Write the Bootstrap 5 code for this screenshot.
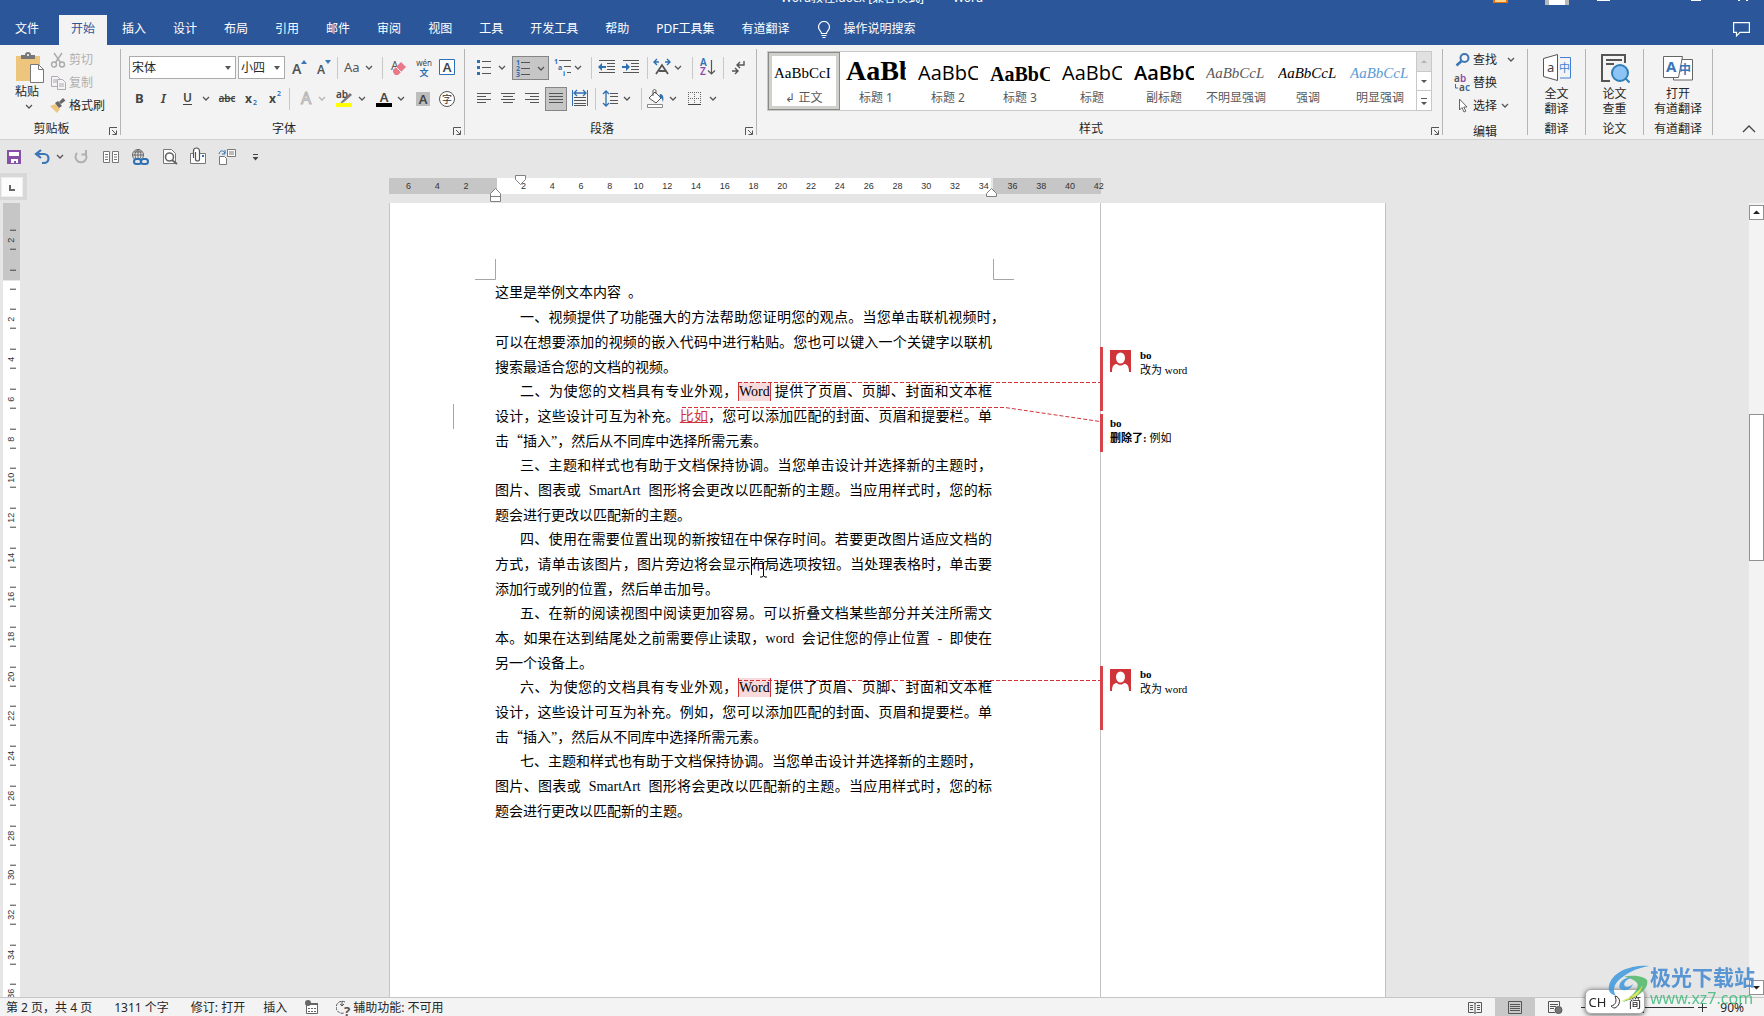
<!DOCTYPE html>
<html lang="zh-CN">
<head>
<meta charset="utf-8">
<meta name="viewport" content="width=device-width, initial-scale=1">
<title>Word教程.docx - Word</title>
<link href="https://cdn.jsdelivr.net/npm/bootstrap@5.3.0/dist/css/bootstrap.min.css" rel="stylesheet">
<style>
:root{--ui:"Noto Sans","Noto Sans CJK SC",sans-serif;--doc:"Liberation Serif","Noto Sans CJK SC",serif;--blue:#2b579a;--ink:#262626;--line:#c6c6c6;--red:#d13438}
body{font:12px/16px var(--ui);color:var(--ink);background:#e6e6e6;height:100vh;overflow:hidden}
button{font:inherit;color:inherit;background:none;border:0;padding:0}
svg{display:block;flex:none}
svg text{font-family:var(--ui)}
.topband{background:var(--blue);color:#fff}
.titlebar{height:5px;overflow:hidden}
.titlebar .doc-title{line-height:14px;white-space:pre}
.tabstrip{height:40px;padding:8px 14px 0 3px}
.tabstrip .nav{gap:3px}
.tabstrip .nav-link{padding:0 12px;height:32px;line-height:32px;color:#fff;border-radius:0;font-size:12px;white-space:nowrap}
.tabstrip .nav-link.active{background:#f3f3f3;color:var(--blue);margin-top:2px;height:30px;line-height:28px}
.tabstrip .file-tab{margin-right:5px}
.tellme{gap:12px;padding-left:16px;line-height:32px;height:32px}
.ribbon{background:#f3f3f3;border-bottom:1px solid #d0d0d0;height:95px;padding:4px 0}
.rgroup{border-right:1px solid #b5b5b5;white-space:nowrap}
.rgroup .gbody{height:72px}
button.gbody{line-height:15px;display:block;padding-bottom:5px}
.glabel{height:16px}
.g-clip{width:121px}.g-font{width:344px}.g-para{width:292px}.g-edit{width:85px}.g-one{width:58px}.g-yd{width:69px}
.toolrow{height:24px;margin-top:7px}
.toolrow .vr{background:#c8c8c8;opacity:1;height:22px;align-self:center;margin:0 2px;width:1px}
.pressed{background:#c6c6c6;outline:1px solid #868686;outline-offset:-1px}
.combo{appearance:none;flex:none;height:23px;border:1px solid #ababab;border-radius:0;font:12px/16px var(--ui);padding:0 16px 0 2px;color:var(--ink);background:#fff url("data:image/svg+xml,%3Csvg xmlns='http://www.w3.org/2000/svg' width='6' height='4'%3E%3Cpath d='M0 0h6L3 4z' fill='%23555'/%3E%3C/svg%3E") no-repeat right 4px center}
.combo.face{width:107px;margin-right:2px}.combo.size{width:47px}
.cmds{margin-top:-1px}
.cmd{height:23px;gap:3px}
.cmd:disabled{color:#b0b0b0}
.gallery{margin:2px 10px 0;height:60px;border:1px solid #c8c8c8;background:#fff}
.tile{width:72px;height:58px;color:#595959;overflow:hidden}
.tile .sample{width:60px;height:31px;line-height:30px;overflow:hidden;text-align:left;margin:1px auto 0;color:#000;white-space:nowrap}
.tile .cap{margin-top:1px}
.tile.on{outline:1px solid #8a8a86;outline-offset:-1px;box-shadow:inset 0 0 0 4px #cfcfcb}
.tile .serif{font-family:"Liberation Serif",serif;font-size:15px}
.tile .h-one{font:bold 28px/26px "Liberation Serif",serif}
.tile .h-three{font:bold 20px/32px "Liberation Serif",serif}
.tile .h-sans{font-family:"Open Sans",sans-serif;font-size:20px}
.tile .soft{color:#595959}
.tile .accent{color:#5b9bd5}
.gscroll{width:15px;border-left:1px solid #c8c8c8}
.gscroll .off{background:#e1e1e1}
.gscroll button+button{border-top:1px solid #c8c8c8}
.collapser{width:51px}
.qat{height:33px}
.tabcorner{width:27px;height:27px;background:#d8d8d8;padding:4px 4px 3px 1px}
.tabcorner button{width:22px;height:20px;background:#fcfcfc;border:1px solid #eee}
.rulerrow{height:30px;padding-right:16px}
.doccol{padding-left:6px}
.hruler{width:997px;height:30px}
.hbar{width:712px;height:16px;margin-top:5px}
.hbar .edge{width:108px;background:#c6c6c6}
.hbar .mid{background:#fff;margin-right:2px}
.marks{left:5px;top:5px;width:719px;height:16px;font:9px/17px "Liberation Sans",sans-serif;color:#333}
.marks span{flex:1;text-align:center}
.work{min-height:0}
.vruler{width:17px;margin-left:3px;background:#fff;overflow:hidden}
.vruler .vtop{height:78px;background:#c6c6c6;border-bottom:1px solid #e6e6e6}
.vmarks{top:17px;left:0;width:17px;height:794px;font:9px/10px "Liberation Sans",sans-serif;color:#333}
.vmarks span{flex:1;writing-mode:vertical-rl;transform:rotate(180deg);text-align:center;padding-right:3px;background:linear-gradient(#444,#444) 4px 25%/6px 1px no-repeat,linear-gradient(#444,#444) 4px 75%/6px 1px no-repeat}
.sheet{width:997px;background:#fff;border:solid #c3c3c3;border-width:0 1px;overflow:hidden}
.textcol{width:711px;border-right:1px solid #c3c3c3;padding:78px 108px 0 105px}
.textcol p{font:14px/25px var(--doc);color:#000;margin:-1px 0 0;white-space:nowrap}
.textcol p:nth-of-type(2){margin-top:0}
.textcol p>span{display:block}
.textcol p>.full{text-align-last:justify}
.textcol p>.ind{padding-left:25px}
.textcol p>.hang{margin-right:-13px}
.wideq{font-family:"Noto Sans CJK SC",sans-serif;line-height:1}
.noted{background:#f8d9dc;border:solid var(--red);border-width:0 1px;padding:2px 0}
.added{color:var(--red);text-decoration:underline}
.pane{font:11px/15px var(--doc);color:#000;padding-top:144px;margin-left:-1px}
.note{border-left:3px solid #d6444a;padding:3px 0 0 7px;gap:9px;height:64px}
.note.short{height:38px;margin-top:3px;padding-top:2px}
.note.far{margin-top:214px}
.note .who{margin-top:-2px}
.overlay{left:-1px;top:0;pointer-events:none}
.vscroll{width:15px;background:#f3f3f3;padding:2px 0}
.vscroll button{height:15px;background:#fff;border:1px solid #919191}
.vscroll .thumb{height:147px;margin-top:194px;background:#fff;border:1px solid #919191}
.statusbar{height:19px;background:#f3f3f3;border-top:1px solid #c6c6c6;padding-left:6px;line-height:20px;white-space:nowrap}
.st-left{gap:18px}
.view-on{background:#c8c8c8}
.zoomer{appearance:none;width:100px;height:18px;background:linear-gradient(#333,#333) center/100% 1px no-repeat;margin:0}
.zoomer::-webkit-slider-thumb{appearance:none;width:5px;height:11px;background:#444}
.ime{right:119px;bottom:2px;width:60px;height:25px;background:#fff;border-radius:6px;border:1px solid #aaa;box-shadow:0 1px 5px #0009;font-size:13px}
.wm{right:9px;bottom:8px;opacity:.85;color:#3f86cf}
.wm .wm-name{font:bold 21px/24px "Noto Sans CJK SC",sans-serif}
.wm .wm-url{font:16px/20px "Noto Sans",sans-serif;color:#3fb979;text-decoration:none}
</style>
<script src="https://cdn.jsdelivr.net/npm/bootstrap@5.3.0/dist/js/bootstrap.bundle.min.js"></script>
</head>
<body class="d-flex flex-column">
<svg width="0" height="0" class="position-absolute"><defs>
<path id="chev" d="M0 0l3 3 3-3" fill="none" stroke="#555" stroke-width="1.3"/>
<g id="launch" fill="none" stroke="#555"><path d="M.5 8V.5H8"/><path d="M3 3l4 4M7.5 3.500v4h-4"/></g>
</defs></svg>

<header class="topband">
  <div class="titlebar d-flex align-items-end justify-content-center position-relative">
    <span class="doc-title">Word教程.docx [兼容模式]    -    Word</span>
    <svg class="position-absolute end-0 top-0" width="280" height="9" overflow="visible"><path d="M9 3V0h15v3z" fill="#e8710a"/><path d="M11 2V0h11v2z" fill="#ffd38a"/><path d="M61 0h24v8H61z" fill="#b9b9b9"/><path d="M65 8V0h16v8z" fill="#fff"/><path d="M113 0h13v1h-13zM207 0h10v1h-10zM254 0h2v1h-2zM262 0h2v1h-2z" fill="#fff"/></svg>
  </div>
  <div class="tabstrip d-flex">
    <nav class="nav flex-nowrap">
      <a class="nav-link file-tab" href="#">文件</a><a class="nav-link active" href="#">开始</a><a class="nav-link" href="#">插入</a><a class="nav-link" href="#">设计</a><a class="nav-link" href="#">布局</a><a class="nav-link" href="#">引用</a><a class="nav-link" href="#">邮件</a><a class="nav-link" href="#">审阅</a><a class="nav-link" href="#">视图</a><a class="nav-link" href="#">工具</a><a class="nav-link" href="#">开发工具</a><a class="nav-link" href="#">帮助</a><a class="nav-link" href="#">PDF工具集</a><a class="nav-link" href="#">有道翻译</a>
    </nav>
    <button class="tellme d-flex"><svg width="14" height="18" viewBox="0 0 14 18" class="mt-2" fill="none" stroke="#fff" stroke-width="1.2"><path d="M4.5 12.500c0-2-3-3-3-6.500a5.500 5.500 0 0 1 11 0c0 3.500-3 4.500-3 6.500zM4.500 14.500h5M5.500 16.500h3"/></svg>操作说明搜索</button>
    <button class="ms-auto align-self-start mt-2" aria-label="批注"><svg width="17" height="16" viewBox="0 0 17 16" fill="none" stroke="#fff" stroke-width="1.200"><path d="M.6 1.600h15.800v9.800H7l-3.500 3.500v-3.500H.6z"/></svg></button>
  </div>
</header>

<section class="ribbon d-flex">
  <div class="rgroup g-clip">
    <div class="gbody d-flex">
      <button class="d-flex flex-column align-items-center ps-2 ms-1">
        <svg width="34" height="35" viewBox="11 49 34 35"><path d="M15 56h24v25H15z" fill="#eec57d"/><path d="M20 59v-4h4a3 3 0 0 1 6 0h4v4z" fill="#777"/><circle cx="27" cy="55" r="1" fill="#fff"/><path d="M29.500 64.500h8l5 5v13h-13z" fill="#fff" stroke="#777"/><path d="M37.500 64.500v5h5" fill="none" stroke="#777"/></svg>
        <span class="me-1">粘贴</span>
        <svg width="14" height="12"><use href="#chev" x="4" y="5"/></svg>
      </button>
      <div class="cmds ms-1">
        <button class="cmd d-flex align-items-center" disabled><svg width="16" height="16" viewBox="0 0 16 16" fill="none" stroke="#aaa" stroke-width="1.400"><path d="M4 1l6.500 9.500M12 1L5.500 10.500"/><circle cx="4" cy="12.500" r="2.500"/><circle cx="12" cy="12.500" r="2.500"/></svg>剪切</button>
        <button class="cmd d-flex align-items-center" disabled><svg width="16" height="16" viewBox="0 0 16 16" fill="#f3f3f3" stroke="#b0a8b4"><path d="M1.500 1.500h6l2 2v8h-8zM3 5h4M3 7h4"/><path d="M7.500 4.500h5l3 3v7h-8zM9 9h5M9 11h5"/></svg>复制</button>
        <button class="cmd d-flex align-items-center"><svg width="16" height="16" viewBox="0 0 16 16"><path d="M0 8l6-2 4 5-3 4z" fill="#eec57d"/><path d="M5 5l3-2 4 5-3 2zM9 4l4-4 2.500 2.500L11 6z" fill="#666"/></svg>格式刷</button>
      </div>
    </div>
    <div class="glabel d-flex"><span class="flex-grow-1 text-center">剪贴板</span><button aria-label="剪贴板选项"><svg width="17" height="16"><use href="#launch" x="6" y="6"/></svg></button></div>
  </div>

  <div class="rgroup g-font">
    <div class="gbody overflow-hidden ps-2">
      <div class="toolrow d-flex">
        <select class="combo face" aria-label="字体"><option>宋体</option></select>
        <select class="combo size" aria-label="字号"><option>小四</option></select>
        <button aria-label="增大字号"><svg width="28" height="24"><text x="7" y="18" font-size="14" fill="#555" font-weight="600">A</text><path d="M16 8l3-4 3 4z" fill="#3a76b5"/></svg></button>
        <button aria-label="减小字号"><svg width="22" height="24"><text x="4" y="18" font-size="12" fill="#555" font-weight="600">A</text><path d="M12 4l3 4 3-4z" fill="#3a76b5"/></svg></button>
        <i class="vr"></i>
        <button aria-label="更改大小写"><svg width="40" height="24"><text x="4" y="16" font-size="13" fill="#555">Aa</text><use href="#chev" x="26" y="10"/></svg></button>
        <i class="vr"></i>
        <button aria-label="清除格式"><svg width="28" height="24"><text x="6" y="14" font-size="12" fill="#555">A</text><path d="M8 14l8-8 5 5-8 8h-3l-2-3z" fill="#e8788a"/><path d="M11 11l5 5" stroke="#fff"/></svg></button>
        <button aria-label="拼音"><svg width="22" height="24"><text x="11" y="10" font-size="8" text-anchor="middle" fill="#444">wén</text><text x="11" y="20" font-size="9" text-anchor="middle" fill="#2f6fb3" font-weight="700">文</text></svg></button>
        <button aria-label="字符边框"><svg width="24" height="24"><path d="M4.500 3.500h15v15h-15z" fill="#fff" stroke="#2f6fb3"/><text x="12" y="16" font-size="13" text-anchor="middle" fill="#444" font-weight="600">A</text></svg></button>
      </div>
      <div class="toolrow d-flex">
        <button aria-label="加粗"><svg width="20" height="24"><text x="6" y="16" font-size="13" font-weight="700" fill="#444">B</text></svg></button>
        <button aria-label="倾斜"><svg width="28" height="24"><text x="12" y="16" font-size="13" font-style="italic" font-weight="600" fill="#444">I</text></svg></button>
        <button aria-label="下划线"><svg width="20" height="24"><text x="6" y="15" font-size="12" font-weight="600" fill="#444">U</text><path d="M6 17.500h9" stroke="#444"/></svg></button>
        <button aria-label="下划线样式"><svg width="18" height="24"><use href="#chev" x="6" y="10"/></svg></button>
        <button aria-label="删除线"><svg width="24" height="24"><text x="12" y="15" font-size="10" text-anchor="middle" font-weight="600" fill="#444">abc</text><path d="M4 11.500h16" stroke="#444"/></svg></button>
        <button aria-label="下标"><svg width="24" height="24"><text x="6" y="16" font-size="12" font-weight="700" fill="#444">x</text><text x="14" y="18" font-size="7" font-weight="600" fill="#2f6fb3">2</text></svg></button>
        <button aria-label="上标"><svg width="24" height="24"><text x="6" y="16" font-size="12" font-weight="700" fill="#444">x</text><text x="14" y="9" font-size="7" font-weight="600" fill="#2f6fb3">2</text></svg></button>
        <i class="vr"></i>
        <button aria-label="文本效果"><svg width="38" height="24"><text x="9" y="17" font-size="16" fill="#fff" stroke="#b5b5b5">A</text><use href="#chev" x="27" y="10" opacity=".4"/></svg></button>
        <button aria-label="突出显示"><svg width="40" height="24"><text x="6" y="11" font-size="10" fill="#444" font-weight="600">ab</text><path d="M11 15l9-9 2 2-8 7-4 2z" fill="#777"/><path d="M6 16h16v4H6z" fill="#ff0"/><use href="#chev" x="29" y="10"/></svg></button>
        <button aria-label="字体颜色"><svg width="38" height="24"><text x="14" y="15" font-size="13" text-anchor="middle" fill="#444" font-weight="600">A</text><path d="M6 16h16v4H6z"/><use href="#chev" x="28" y="10"/></svg></button>
        <button aria-label="字符底纹"><svg width="27" height="24"><path d="M8 5h14v14H8z" fill="#bdbdbd"/><text x="15" y="17" font-size="13" text-anchor="middle" fill="#444" font-weight="600">A</text></svg></button>
        <button aria-label="带圈字符"><svg width="24" height="24"><circle cx="12" cy="12" r="7.500" fill="#fff" stroke="#555"/><text x="12" y="16" font-size="10" text-anchor="middle" fill="#333">字</text></svg></button>
      </div>
    </div>
    <div class="glabel d-flex"><span class="flex-grow-1 text-center">字体</span><button aria-label="字体选项"><svg width="17" height="16"><use href="#launch" x="6" y="6"/></svg></button></div>
  </div>

  <div class="rgroup g-para">
    <div class="gbody overflow-hidden ps-2">
      <div class="toolrow d-flex">
        <button aria-label="项目符号"><svg width="39" height="24"><path d="M4 4h3v3H4zM4 10h3v3H4zM4 16h3v3H4z" fill="#2f6fb3"/><path d="M9 5.500h9M9 11.500h9M9 17.500h9" stroke="#555"/><use href="#chev" x="26" y="10"/></svg></button>
        <button class="pressed" aria-label="编号"><svg width="37" height="23"><g font-size="7" fill="#2f6fb3" font-weight="700"><text x="4" y="8">1</text><text x="4" y="14">2</text><text x="4" y="20">3</text></g><path d="M9 5.500h9M9 11.500h9M9 17.500h9" stroke="#555"/><use href="#chev" x="26" y="10"/></svg></button>
        <button aria-label="多级列表"><svg width="40" height="24"><g font-size="7" fill="#2f6fb3" font-weight="700"><text x="5" y="8">1</text><text x="9" y="14">a</text><text x="14" y="20">i</text></g><path d="M10 4.500h12M15 10.500h7M18 16.500h4" stroke="#555"/><use href="#chev" x="26" y="10"/></svg></button>
        <i class="vr"></i>
        <button aria-label="减少缩进"><svg width="26" height="24"><path d="M5 4.500h16M13 7.500h8M13 10.500h8M13 13.500h8M5 16.500h16" stroke="#555"/><path d="M12 10H8V7l-4 4 4 4v-3h4z" fill="#2f6fb3"/></svg></button>
        <button aria-label="增加缩进"><svg width="25" height="24"><path d="M3 4.500h16M11 7.500h8M11 10.500h8M11 13.500h8M3 16.500h16" stroke="#555"/><path d="M2 10h4V7l4 4-4 4v-3H2z" fill="#2f6fb3"/></svg></button>
        <i class="vr"></i>
        <button aria-label="中文版式"><svg width="40" height="24"><path d="M6 18l6-9 6 9M9 15h7" fill="none" stroke="#555" stroke-width="1.800"/><path d="M7 3L4 6l3 3M17 3l3 3-3 3M4 6h5M20 6h-5" fill="none" stroke="#2f6fb3" stroke-width="1.400"/><use href="#chev" x="25" y="10"/></svg></button>
        <i class="vr"></i>
        <button aria-label="排序"><svg width="26" height="24"><text x="5" y="10" font-size="10" font-weight="600" fill="#2f6fb3">A</text><text x="5" y="19" font-size="10" font-weight="600" fill="#8e4bab">Z</text><path d="M16.500 4v14M13 14.500l3.500 3.500 3.500-3.500" fill="none" stroke="#555" stroke-width="1.200"/></svg></button>
        <i class="vr"></i>
        <button aria-label="显示编辑标记"><svg width="26" height="24"><path d="M18 5v4h-7M14 6l-3 3 3 3M6 15h6M9 12l3 3-3 3" fill="none" stroke="#555" stroke-width="1.400"/></svg></button>
      </div>
      <div class="toolrow d-flex">
        <button aria-label="左对齐"><svg width="24" height="24"><path d="M4 6.500h14M4 9.500h9M4 12.500h14M4 15.500h9" stroke="#555"/></svg></button>
        <button aria-label="居中"><svg width="24" height="24"><path d="M4 6.500h14M6 9.500h10M4 12.500h14M6 15.500h10" stroke="#555"/></svg></button>
        <button aria-label="右对齐"><svg width="24" height="24"><path d="M4 6.500h14M9 9.500h9M4 12.500h14M9 15.500h9" stroke="#555"/></svg></button>
        <button class="pressed" aria-label="两端对齐"><svg width="22" height="24"><path d="M4 6.500h14M4 9.500h14M4 12.500h14M4 15.500h14" stroke="#555"/></svg></button>
        <button aria-label="分散对齐"><svg width="26" height="24"><path d="M5.500 3v16M20.500 3v16" stroke="#2f6fb3"/><path d="M8 6h10M10 3L7 6l3 3M16 3l3 3-3 3" fill="none" stroke="#2f6fb3" stroke-width="1.300"/><path d="M7 10.500h12M7 13.500h12M7 16.500h12M7 18.500h12" stroke="#555"/></svg></button>
        <i class="vr"></i>
        <button aria-label="行距"><svg width="41" height="24"><path d="M8 4v15M5 7l3-3 3 3M5 16l3 3 3-3" fill="none" stroke="#2f6fb3" stroke-width="1.300"/><path d="M12 6.500h8M12 9.500h8M12 13.500h8M12 16.500h8" stroke="#555"/><use href="#chev" x="26" y="10"/></svg></button>
        <i class="vr"></i>
        <button aria-label="底纹"><svg width="40" height="24"><path d="M5 11l6-6 6 6-5 5z" fill="#fff" stroke="#555"/><path d="M9 9V4c0-2 3-2 3 0v3" fill="none" stroke="#555"/><path d="M16 7c3 0 4 3 3 8-1-3-1-4-4-5z" fill="#2f6fb3"/><path d="M3.500 17.500h15v3h-15z" fill="#fff" stroke="#888"/><use href="#chev" x="26" y="10"/></svg></button>
        <button aria-label="边框"><svg width="36" height="24"><path d="M4.500 5v13M10.500 5v13M16.500 5v13M4 5.500h13M4 11.500h13" stroke="#666" stroke-dasharray="1 1"/><path d="M4 17.500h13" stroke="#444"/><use href="#chev" x="26" y="10"/></svg></button>
      </div>
    </div>
    <div class="glabel d-flex"><span class="flex-grow-1 text-center">段落</span><button aria-label="段落选项"><svg width="17" height="16"><use href="#launch" x="6" y="6"/></svg></button></div>
  </div>

  <div class="rgroup flex-grow-1">
    <div class="gbody overflow-hidden">
      <div class="gallery d-flex">
        <div class="d-flex flex-grow-1 overflow-hidden">
          <button class="tile on"><div class="sample serif">AaBbCcI</div><div class="cap">↲ 正文</div></button>
          <button class="tile"><div class="sample h-one">AaBb</div><div class="cap">标题 1</div></button>
          <button class="tile"><div class="sample h-sans">AaBbC</div><div class="cap">标题 2</div></button>
          <button class="tile"><div class="sample h-three">AaBbC</div><div class="cap">标题 3</div></button>
          <button class="tile"><div class="sample h-sans">AaBbC</div><div class="cap">标题</div></button>
          <button class="tile"><div class="sample h-sans fw-semibold">AaBbC</div><div class="cap">副标题</div></button>
          <button class="tile"><div class="sample serif fst-italic soft">AaBbCcL</div><div class="cap">不明显强调</div></button>
          <button class="tile"><div class="sample serif fst-italic">AaBbCcL</div><div class="cap">强调</div></button>
          <button class="tile"><div class="sample serif fst-italic accent">AaBbCcL</div><div class="cap">明显强调</div></button>
        </div>
        <div class="gscroll d-flex flex-column">
          <button class="flex-fill off" aria-label="向上"><svg width="14" height="18"><path d="M4 11h6L7 8z" fill="#b5b5b5"/></svg></button>
          <button class="flex-fill" aria-label="向下"><svg width="14" height="18"><path d="M4 8h6l-3 3z" fill="#555"/></svg></button>
          <button class="flex-fill" aria-label="更多"><svg width="14" height="18"><path d="M4 10h6l-3 3zM4 6h6v1H4z" fill="#555"/></svg></button>
        </div>
      </div>
    </div>
    <div class="glabel d-flex"><span class="flex-grow-1 text-center">样式</span><button aria-label="样式选项"><svg width="17" height="16"><use href="#launch" x="6" y="6"/></svg></button></div>
  </div>

  <div class="rgroup g-edit">
    <div class="gbody cmds ps-2 ms-1">
      <button class="cmd d-flex align-items-center"><svg width="15" height="16" fill="none" stroke="#3a76b5" stroke-width="2"><circle cx="9.500" cy="6" r="4"/><path d="M6.500 9l-5 4.500" stroke-width="2.500"/></svg>查找<svg width="26" height="8"><use href="#chev" x="8" y="2"/></svg></button>
      <button class="cmd d-flex align-items-center"><svg width="15" height="18" overflow="visible" font-size="10" font-weight="600"><text x="-1" y="8" fill="#555">a</text><text x="5" y="8" fill="#8e4bab">b</text><text x="4" y="17" fill="#555">a</text><text x="10" y="17" fill="#2f6fb3">c</text><path d="M.5 10v4H3" fill="none" stroke="#2f6fb3"/></svg>替换</button>
      <button class="cmd d-flex align-items-center"><svg width="15" height="16" fill="#fff" stroke="#666"><path d="M4.500 1v11l2.500-2.500 2 4.500 1.800-.8-2-4.200h3.200z"/></svg>选择<svg width="14" height="8"><use href="#chev" x="2" y="2"/></svg></button>
    </div>
    <div class="glabel text-center mt-1">编辑</div>
  </div>
  <div class="rgroup g-one text-center">
    <button class="gbody w-100"><svg class="mx-auto" width="30" height="36" viewBox="0 0 30 36" fill="none"><path d="M1.500 8.500l14-4v26l-14-4z" fill="#fff" stroke="#555"/><path d="M18 7.500h10.500v20.500H18" stroke="#3f7fd6"/><text x="5" y="22" font-size="13" fill="#444">a</text><text x="17" y="22" font-size="11" fill="#3f7fd6">中</text></svg>全文<br>翻译</button>
    <div class="glabel">翻译</div>
  </div>
  <div class="rgroup g-one text-center">
    <button class="gbody w-100"><svg class="mx-auto" width="30" height="36" viewBox="0 0 30 36" fill="none" stroke="#555" stroke-width="2"><path d="M25 13V5H2v26h8M6 10h16M6 14h8"/><circle cx="20" cy="23" r="8" fill="#8dc3f5" stroke="#2f7fb8"/><path d="M25.500 28.500l4 4" stroke="#2f7fb8"/></svg>论文<br>查重</button>
    <div class="glabel">论文</div>
  </div>
  <div class="rgroup g-yd text-center">
    <button class="gbody w-100"><svg class="mx-auto" width="32" height="36" viewBox="0 0 32 36"><path d="M17 9.500h13.500v20.500h-19v-3" fill="#fff" stroke="#666"/><path d="M1.500 6.500h19l-4 21h-15z" fill="#fff" stroke="#666"/><text x="4" y="22" font-size="15" font-weight="700" fill="#3a76b5">A</text><text x="17" y="24" font-size="12" font-weight="700" fill="#3a76b5">中</text></svg>打开<br>有道翻译</button>
    <div class="glabel">有道翻译</div>
  </div>
  <div class="collapser d-flex align-items-end justify-content-end"><button class="pe-2" aria-label="折叠功能区"><svg width="14" height="12"><path d="M1 9l6-6 6 6" fill="none" stroke="#444" stroke-width="1.300"/></svg></button></div>
</section>

<div class="qat d-flex align-items-center">
  <button aria-label="保存"><svg width="28" height="24"><path d="M7 5h14v14H7z" fill="#8650a8"/><path d="M9 7h10v4H9zM11 14h7v4h-2v-2h-2v2h-3z" fill="#fff"/></svg></button>
  <button aria-label="撤消"><svg width="40" height="24"><path d="M13 5l-5 4 5 4M9 9h7a4 4 0 0 1 0 9h-2" fill="none" stroke="#3a76b5" stroke-width="2.200"/><use href="#chev" x="29" y="10"/></svg></button>
  <button aria-label="恢复"><svg width="28" height="24"><path d="M9 8a5.500 5.500 0 1 0 8 0M18 5v4.500h-4.500" fill="none" stroke="#b0b0b0" stroke-width="2"/></svg></button>
  <button aria-label="双页"><svg width="32" height="24" fill="#fff" stroke="#777"><path d="M7.500 6.500h6v11h-6zM16.500 6.500h6v11h-6z"/><path d="M9 9.500h3M9 12h3M9 14.500h3M18 9.500h3M18 12h3M18 14.500h3"/></svg></button>
  <button aria-label="链接"><svg width="28" height="24" fill="none" stroke="#666"><circle cx="10" cy="10" r="5.500"/><path d="M4.500 10h11M10 4.500v11M6 7h8M10 4.500c-4 3-4 8 0 11M10 4.500c4 3 4 8 0 11"/><g stroke="#2f6fb3" stroke-width="2"><rect x="6" y="14" width="7" height="5" rx="2.500" fill="#e6e6e6"/><rect x="13" y="14" width="7" height="5" rx="2.500"/></g></svg></button>
  <button aria-label="打印预览"><svg width="28" height="24"><path d="M7.500 4.500h8l4 4v10h-12z" fill="#fff" stroke="#777"/><circle cx="13.500" cy="12" r="4" fill="#fff" stroke="#666" stroke-width="1.600"/><path d="M16 15l5 4" stroke="#666" stroke-width="2"/></svg></button>
  <button aria-label="附件"><svg width="30" height="24"><path d="M6.500 8.500h15v10h-15z" fill="#fff" stroke="#777"/><path d="M9.500 13V6a3 3 0 0 1 6 0v8a1.500 1.500 0 0 1-4 0V7" fill="#fff" stroke="#555" stroke-width="1.200"/><path d="M18 10h2v2h-2z" fill="#2f6fb3"/></svg></button>
  <button aria-label="合并"><svg width="28" height="24"><path d="M13.500 4.500h8v7h-8zM5.500 11.500h5l2 2v6h-7z" fill="#fff" stroke="#777"/><path d="M15 7h5M15 9h5" stroke="#777"/><path d="M5 9c1-4 4-4 6-1M11 5v4H8" fill="none" stroke="#2f6fb3"/></svg></button>
  <button aria-label="自定义"><svg width="26" height="24"><path d="M11 9h5v1h-5zM10.500 12h6l-3 3.500z" fill="#444"/></svg></button>
</div>

<div class="rulerrow d-flex">
  <div class="tabcorner"><button class="d-block" aria-label="制表符"><svg width="20" height="18"><path d="M8 7v5h5" fill="none" stroke="#666" stroke-width="2"/></svg></button></div>
  <div class="flex-grow-1 d-flex justify-content-center">
    <div class="hruler position-relative">
      <div class="hbar d-flex"><div class="edge"></div><div class="mid flex-grow-1"></div><div class="edge"></div></div>
      <div class="marks position-absolute d-flex"><span>6</span><span>4</span><span>2</span><span></span><span>2</span><span>4</span><span>6</span><span>8</span><span>10</span><span>12</span><span>14</span><span>16</span><span>18</span><span>20</span><span>22</span><span>24</span><span>26</span><span>28</span><span>30</span><span>32</span><span>34</span><span>36</span><span>38</span><span>40</span><span>42</span></div>
      <svg class="position-absolute top-0 start-0" width="712" height="30" viewBox="389 173 712 30" fill="#fff" stroke="#808080"><path d="M515.500 175.500h10v4l-5 5-5-5zM490.500 193.500l5-5 5 5v8h-10zM490.500 196.500h10M986.500 193.500l5-5 5 5v3h-10z"/></svg>
    </div>
  </div>
</div>

<main class="work flex-grow-1 d-flex">
  <div class="vruler position-relative"><div class="vtop"></div>
    <div class="vmarks position-absolute d-flex flex-column"><span>2</span><span>&nbsp;</span><span>2</span><span>4</span><span>6</span><span>8</span><span>10</span><span>12</span><span>14</span><span>16</span><span>18</span><span>20</span><span>22</span><span>24</span><span>26</span><span>28</span><span>30</span><span>32</span><span>34</span><span>36</span></div>
  </div>
  <div class="doccol flex-grow-1 d-flex justify-content-center">
    <div class="sheet d-flex position-relative">
      <article class="textcol flex-shrink-0">
        <p><span>这里是举例文本内容 &nbsp;。</span></p>
        <p><span class="ind full hang">一、视频提供了功能强大的方法帮助您证明您的观点。当您单击联机视频时，</span><span class="full">可以在想要添加的视频的嵌入代码中进行粘贴。您也可以键入一个关键字以联机</span><span>搜索最适合您的文档的视频。</span></p>
        <p><span class="ind full">二、为使您的文档具有专业外观，<span class="noted">Word</span> 提供了页眉、页脚、封面和文本框</span><span class="full">设计，这些设计可互为补充。<span class="added">比如</span>，您可以添加匹配的封面、页眉和提要栏。单</span><span>击<span class="wideq">“</span>插入”，然后从不同库中选择所需元素。</span></p>
        <p><span class="ind full">三、主题和样式也有助于文档保持协调。当您单击设计并选择新的主题时，</span><span class="full">图片、图表或 &nbsp;SmartArt &nbsp;图形将会更改以匹配新的主题。当应用样式时，您的标</span><span>题会进行更改以匹配新的主题。</span></p>
        <p><span class="ind full">四、使用在需要位置出现的新按钮在中保存时间。若要更改图片适应文档的</span><span class="full">方式，请单击该图片，图片旁边将会显示布局选项按钮。当处理表格时，单击要</span><span>添加行或列的位置，然后单击加号。</span></p>
        <p><span class="ind full">五、在新的阅读视图中阅读更加容易。可以折叠文档某些部分并关注所需文</span><span class="full">本。如果在达到结尾处之前需要停止读取，word &nbsp;会记住您的停止位置 &nbsp;-&nbsp; 即使在</span><span>另一个设备上。</span></p>
        <p><span class="ind full">六、为使您的文档具有专业外观，<span class="noted">Word</span> 提供了页眉、页脚、封面和文本框</span><span class="full">设计，这些设计可互为补充。例如，您可以添加匹配的封面、页眉和提要栏。单</span><span>击<span class="wideq">“</span>插入”，然后从不同库中选择所需元素。</span></p>
        <p><span class="ind">七、主题和样式也有助于文档保持协调。当您单击设计并选择新的主题时，</span><span class="full">图片、图表或 &nbsp;SmartArt &nbsp;图形将会更改以匹配新的主题。当应用样式时，您的标</span><span>题会进行更改以匹配新的主题。</span></p>
      </article>
      <aside class="pane flex-grow-1">
        <div class="note d-flex"><svg width="21" height="22"><path d="M0 0h21v22H0z" fill="#d13438"/><ellipse cx="10.500" cy="8" rx="4.500" ry="5.500" fill="#fff"/><path d="M2 22c0-6 2-8 5-8 2 2 5 2 7 0 3 0 5 2 5 8z" fill="#fff"/></svg><div class="who"><b>bo</b><br>改为 word</div></div>
        <div class="note short"><b>bo</b><br><b>删除了:</b> 例如</div>
        <div class="note far d-flex"><svg width="21" height="22"><path d="M0 0h21v22H0z" fill="#d13438"/><ellipse cx="10.500" cy="8" rx="4.500" ry="5.500" fill="#fff"/><path d="M2 22c0-6 2-8 5-8 2 2 5 2 7 0 3 0 5 2 5 8z" fill="#fff"/></svg><div class="who"><b>bo</b><br>改为 word</div></div>
      </aside>
      <svg class="overlay position-absolute" width="997" height="794" viewBox="389 203 997 794" fill="none"><path d="M475 279.500h20.500V259M1014 279.500h-20.500V259M453.500 404v25" stroke="#a6a6a6"/><path d="M738 382.500h362M682 407.500h323l95 14M738 680.500h362" stroke="#d13438" stroke-dasharray="4 2"/><path d="M751.500 557v18M763.500 562v14M760 561.500h2l1.500 1 1.500-1h2M760 577h2l1.500-1 1.500 1h2" stroke="#000"/></svg>
    </div>
  </div>
  <div class="vscroll d-flex flex-column">
    <button aria-label="向上滚动"><svg width="13" height="13"><path d="M3 8h7L6.500 4.500z" fill="#222"/></svg></button>
    <div class="thumb"></div>
    <button class="mt-auto" aria-label="向下滚动"><svg width="13" height="13"><path d="M3 5h7L6.500 8.500z" fill="#222"/></svg></button>
  </div>
</main>

<footer class="statusbar d-flex">
  <div class="st-left d-flex"><span class="me-1">第 2 页，共 4 页</span><span class="me-1">1311 个字</span><span>修订: 打开</span><span>插入</span>
    <svg width="13" height="18"><path d="M1.500 6.500h11v9h-11z" fill="#fff" stroke="#666"/><path d="M5 5h8v2H5zM3 10h2v1H3zM6 10h2v1H6zM9 10h2v1H9zM3 13h2v1H3zM6 13h2v1H6zM9 13h2v1H9z" fill="#666"/><circle cx="3" cy="5" r="3" fill="#666"/></svg>
    <span class="d-flex"><svg width="17" height="18"><path d="M9 4a6 6 0 1 0-1 11" fill="none" stroke="#555" stroke-dasharray="3 1"/><path d="M6 3v5M4 6l2 2 2-2" fill="none" stroke="#555"/><text x="8" y="18" font-size="13" font-weight="700" fill="#555">?</text></svg>辅助功能: 不可用</span></div>
  <div class="ms-auto d-flex">
    <button aria-label="阅读视图"><svg width="40" height="18" fill="none" stroke="#555"><path d="M13.500 4.500h5l1.500 1 1.500-1h5v10h-5l-1.500 1-1.500-1h-5zM20 5v10M15 7.500h3M15 9.500h3M15 11.500h3M22 7.500h3M22 9.500h3M22 11.500h3"/></svg></button>
    <button class="view-on" aria-label="页面视图"><svg width="40" height="18" fill="none" stroke="#555"><path d="M13.500 3.500h13v12h-13zM15 6.500h10M15 8.500h10M15 10.500h10M15 12.500h10"/></svg></button>
    <button aria-label="Web 版式"><svg width="42" height="18" fill="none" stroke="#555"><path d="M20 14.500h-6.500v-11h11V8M15 6.500h8M15 8.500h6M15 10.500h4"/><circle cx="23.500" cy="12" r="3.500" fill="#777"/></svg></button>
    <button aria-label="缩小"><svg width="17" height="18"><path d="M4 9.500h9" stroke="#333"/></svg></button>
    <input class="zoomer" type="range" min="10" max="200" value="100" aria-label="缩放">
    <button aria-label="放大"><svg width="18" height="18"><path d="M4 9.500h9M8.500 5v9" stroke="#333"/></svg></button>
    <span class="ps-2 pe-3 me-1">90%</span>
  </div>
</footer>

<div class="ime position-fixed d-flex align-items-center justify-content-center"><span>CH</span><svg width="14" height="14" class="mx-1"><path d="M5 1c6 1 6 9 0 12-2 0-3-1-4-2 5-1 6-5 4-10z" fill="none" stroke="#333"/></svg><span>简</span></div>
<div class="wm position-fixed d-flex">
  <svg width="42" height="42" viewBox="0 0 44 42"><path d="M43 1C22 0 4 8 1 22c-1 6 2 9 7 10-4-7-1-14 8-20C24 6 32 3 43 1z" fill="#3b97dd"/><path d="M17 12c10-2 22 0 24 4 2 8-8 18-26 23 10-6 17-13 16-19-2-5-9-6-14-8z" fill="#4fb868"/><path d="M25 13c-9 0-14 6-13 11 3 5 13 2 14-4-2 3-8 4-9 1 0-4 4-6 8-8z" fill="#3b97dd"/><path d="M12 38c9-2 20-9 24-17-1 9-9 16-24 17z" fill="#d9e24a"/></svg>
  <div class="d-flex flex-column"><span class="wm-name">极光下载站</span><a class="wm-url" href="#">www.xz7.com</a></div>
</div>
</body>
</html>
